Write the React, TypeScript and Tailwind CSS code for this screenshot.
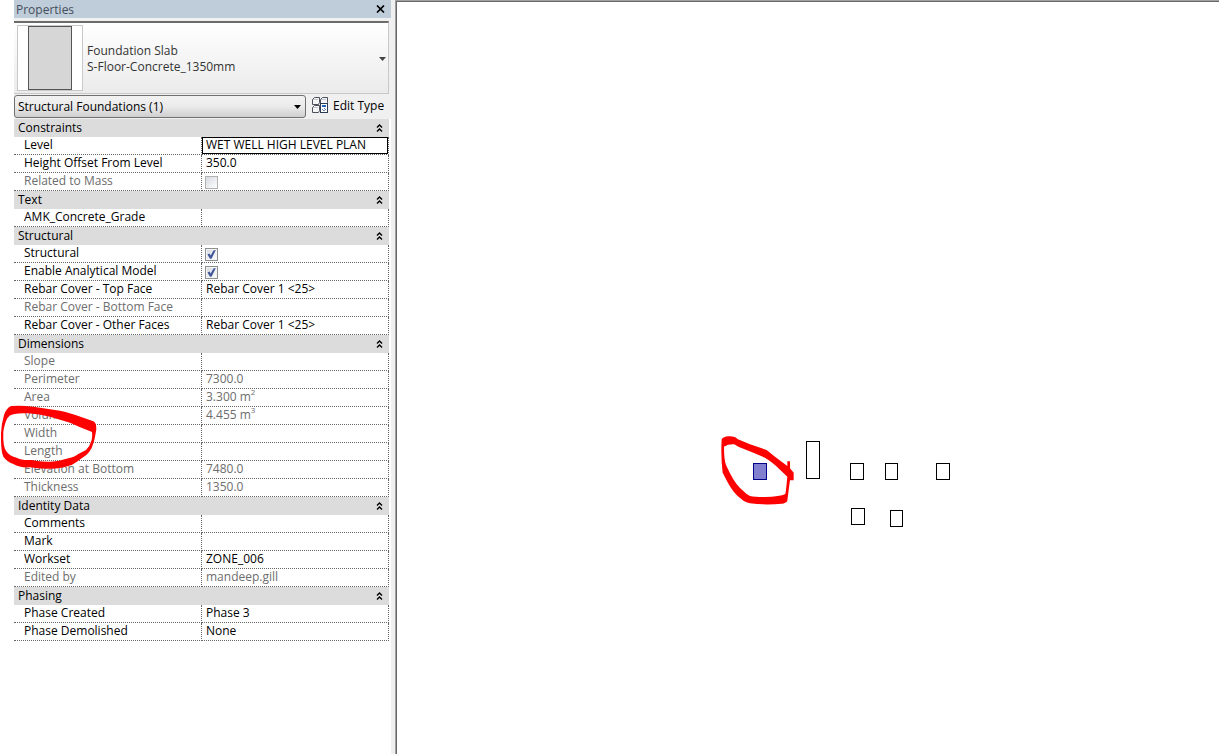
import { useState } from "react";
import clsx from "clsx";

type Row = {
  name: string;
  value?: string;
  sup?: string;
  check?: boolean;
  readOnly?: boolean;
  active?: boolean;
};

type Group = { title: string; rows: Row[] };

const groups: Group[] = [
  {
    title: "Constraints",
    rows: [
      { name: "Level", value: "WET WELL HIGH LEVEL PLAN", active: true },
      { name: "Height Offset From Level", value: "350.0" },
      { name: "Related to Mass", check: false, readOnly: true },
    ],
  },
  { title: "Text", rows: [{ name: "AMK_Concrete_Grade", value: "" }] },
  {
    title: "Structural",
    rows: [
      { name: "Structural", check: true },
      { name: "Enable Analytical Model", check: true },
      { name: "Rebar Cover - Top Face", value: "Rebar Cover 1 <25>" },
      { name: "Rebar Cover - Bottom Face", readOnly: true },
      { name: "Rebar Cover - Other Faces", value: "Rebar Cover 1 <25>" },
    ],
  },
  {
    title: "Dimensions",
    rows: [
      { name: "Slope", readOnly: true },
      { name: "Perimeter", value: "7300.0", readOnly: true },
      { name: "Area", value: "3.300 m", sup: "2", readOnly: true },
      { name: "Volume", value: "4.455 m", sup: "3", readOnly: true },
      { name: "Width", readOnly: true },
      { name: "Length", readOnly: true },
      { name: "Elevation at Bottom", value: "7480.0", readOnly: true },
      { name: "Thickness", value: "1350.0", readOnly: true },
    ],
  },
  {
    title: "Identity Data",
    rows: [
      { name: "Comments", value: "" },
      { name: "Mark", value: "" },
      { name: "Workset", value: "ZONE_006" },
      { name: "Edited by", value: "mandeep.gill", readOnly: true },
    ],
  },
  {
    title: "Phasing",
    rows: [
      { name: "Phase Created", value: "Phase 3" },
      { name: "Phase Demolished", value: "None" },
    ],
  },
];

function CollapseIcon() {
  return (
    <svg width="7" height="9" viewBox="0 0 7 9" fill="none" stroke="#000" strokeWidth="1.4">
      <path d="M1 3.500 3.500 1 6 3.500M1 7.500 3.500 5 6 7.500" />
    </svg>
  );
}

function EditTypeIcon() {
  return (
    <svg width="17" height="17" viewBox="0 0 17 17" fill="none">
      <g fill="#f4f5f7" stroke="#4b505a">
        <path d="M2.500 .5H7.500V5.500L6.500 7.500H.5V2.500z" />
        <path d="M10.500 .5H15.500V5.500L14.500 7.500H8.500V2.500z" />
        <path d="M2.500 8.500H7.500V13.500L6.500 15.500H.5V10.500z" />
      </g>
      <path d="M1 2.500H6M9 2.500H14M1 10.500H6" stroke="#c3c6cc" />
      <rect x="8.500" y="6.500" width="7" height="9" fill="#fff" stroke="#2f3b52" />
      <rect x="10" y="8" width="4" height="2" fill="#1f66b5" />
      <path d="M10 12.500h1M12 11.500h1M13 12.500h1M11 13.500h2" stroke="#5f7fae" />
    </svg>
  );
}

function Checkbox({ row, id }: { row: Row; id: string }) {
  const [checked, setChecked] = useState(!!row.check);
  return (
    <span className="relative mt-px flex size-[13px]">
      <input
        id={id}
        type="checkbox"
        checked={checked}
        disabled={row.readOnly}
        onChange={(e) => setChecked(e.target.checked)}
        className={clsx(
          "size-[13px] appearance-none border bg-linear-to-br from-[#d5d9e0] to-white",
          row.readOnly ? "border-[#b1b1b1]" : "border-[#8e8f8f] inset-ring inset-ring-[#f4f4f4]"
        )}
      />
      {checked && (
        <svg
          className="pointer-events-none absolute inset-0"
          width="13"
          height="13"
          viewBox="0 0 13 13"
        >
          <path d="M2.500 6.500 4.500 5.500 5.700 7.500 8.500 2.500 10.800 2 6.500 10.800 5 10.800z" fill="#3f5598" />
        </svg>
      )}
    </span>
  );
}

function PropertyRow({ row }: { row: Row }) {
  const id = row.name.toLowerCase().replace(/[^a-z]+/g, "-");
  const isCheck = row.check !== undefined;
  const editable = !row.readOnly && !isCheck;

  return (
    <tr className={clsx("h-[18px]", row.readOnly ? "text-[#6d6d6d]" : "text-black")}>
      <th
        scope="row"
        className="h-[18px] border-r border-b border-dotted border-[#666] p-0 pl-2.5 text-left font-normal"
      >
        <label htmlFor={editable || isCheck ? id : undefined} className="block h-[17px] leading-4">
          {row.name}
        </label>
      </th>
      <td className="h-[18px] border-r border-b border-dotted border-[#666] p-0">
        {isCheck && (
          <div className="flex h-[17px] items-center pl-[3px]">
            <Checkbox row={row} id={id} />
          </div>
        )}
        {editable && (
          <input
            id={id}
            type="text"
            defaultValue={row.value}
            className={clsx(
              "block h-[17px] w-full border px-[3px] pb-0.5 leading-4 outline-none",
              row.active ? "border-black" : "border-transparent"
            )}
          />
        )}
        {!editable && !isCheck && (
          <div className="h-[17px] pl-1 leading-4">
            {row.value}
            {row.sup && <span className="relative -top-1.5 text-[8px] leading-none">{row.sup}</span>}
          </div>
        )}
      </td>
    </tr>
  );
}

function PropertiesPalette() {
  return (
    <aside className="w-[377px] shrink-0">
      <header className="flex h-[18px] items-center justify-between bg-[#bfcddb] pr-1.5 pl-0.5 text-[#444e5a]">
        <h1 className="pt-0.5">Properties</h1>
        <button type="button" aria-label="Close">
          <svg width="9" height="8" viewBox="0 0 9 8" stroke="#000" strokeWidth="1.7">
            <path d="M1 .5 8 7.500M8 .5 1 7.500" />
          </svg>
        </button>
      </header>

      <div className="bg-[#f0f0f0] pt-[3px] pr-0.5">
        <button
          type="button"
          className="flex h-[73px] w-full items-center border-t-2 border-r border-b border-[#c8c8c8] border-t-[#6b6b6b] bg-linear-to-b from-white to-[#ebebeb] pr-0.5 pl-[3px] text-left"
        >
          <span className="flex size-[66px] justify-center border border-[#c8c8c8] bg-white">
            <span className="h-16 w-11 border border-[#555] bg-[#d6d6d6]" />
          </span>
          <span className="ml-1 flex-1 pt-0.5 leading-4 text-[#333]">
            Foundation Slab
            <br />
            S-Floor-Concrete_1350mm
          </span>
          <svg className="mt-0.5" width="7" height="4" viewBox="0 0 7 4" fill="#444">
            <path d="M0 0h7L3.500 4z" />
          </svg>
        </button>

        <div className="flex h-[25px] items-center">
          <div className="relative w-[292px]">
            <select
              aria-label="Element filter"
              className="block h-[23px] w-full appearance-none rounded-[3px] border border-[#707070] bg-linear-to-b from-[#f2f2f2] via-[#ebebeb] via-50% to-[#cfcfcf] pl-[3px] text-black"
            >
              <option>Structural Foundations (1)</option>
            </select>
            <svg
              className="pointer-events-none absolute top-2.5 right-[5px]"
              width="7"
              height="4"
              viewBox="0 0 7 4"
            >
              <path d="M0 0h7L3.500 4z" />
            </svg>
          </div>
          <button type="button" className="ml-1.5 flex items-center gap-1 pb-0.5 text-black">
            <EditTypeIcon />
            Edit Type
          </button>
        </div>
      </div>

      <div className="pr-0.5">
        <table className="w-full table-fixed border-separate border-spacing-0">
          <colgroup>
            <col className="w-[188px]" />
            <col />
          </colgroup>
          {groups.map((group) => (
            <tbody key={group.title}>
              <tr>
                <th
                  colSpan={2}
                  scope="colgroup"
                  className="h-[18px] bg-[#dcdcdc] p-0 font-normal text-black"
                >
                  <div className="flex h-[18px] items-center justify-between pr-1.5 pl-1">
                    {group.title}
                    <button type="button" aria-label={`Collapse ${group.title}`}>
                      <CollapseIcon />
                    </button>
                  </div>
                </th>
              </tr>
              {group.rows.map((row) => (
                <PropertyRow key={row.name} row={row} />
              ))}
            </tbody>
          ))}
        </table>
      </div>
    </aside>
  );
}

// slab outlines on the plan, in drawing coordinates
const slabs = [
  { x: 409, y: 441, w: 13, h: 37 },
  { x: 453, y: 463, w: 13, h: 16 },
  { x: 488, y: 463, w: 12, h: 16 },
  { x: 539, y: 463, w: 13, h: 16 },
  { x: 454, y: 508, w: 13, h: 16 },
  { x: 493, y: 510, w: 12, h: 16 },
];

function PlanView() {
  return (
    <main className="flex min-w-0 flex-1 overflow-hidden border-t border-l border-[#a0a0a0] bg-white">
      <div className="min-w-0 flex-1 border-t border-l border-[#696969]">
        <svg
          className="-mt-0.5 -ml-px"
          width="823"
          height="754"
          viewBox="0 0 823 754"
          fill="none"
          role="img"
          aria-label="Floor plan"
        >
          <g stroke="#000" shapeRendering="crispEdges">
            {slabs.map((s) => (
              <rect key={`${s.x}-${s.y}`} x={s.x + 1.5} y={s.y + 0.5} width={s.w} height={s.h} />
            ))}
          </g>
          <rect
            x="357.500"
            y="463.500"
            width="13"
            height="16"
            fill="#8080cf"
            stroke="#00008b"
            shapeRendering="crispEdges"
          />
          {/* red marker loop round the selected slab */}
          <path
            transform="translate(304 420) scale(0.33333)"
            fill="#f00"
            fillRule="evenodd"
            d="M65 58Q70 50 85 49Q106 48 112 57L150 73L200 90L225 110L262 138V124H270V145L281 158V181H270L266 210L262 242Q258 250 245 251Q200 256 150 250Q132 246 125 238Q100 220 82 185L68 158Q62 110 65 58ZM72 80Q84 72 103 73L115 80L160 98L195 113Q210 122 225 135L262 170L258 210L256 222Q240 230 195 231Q165 231 150 228Q138 222 130 213Q108 196 90 160L78 135Q72 118 72 80Z"
          />
        </svg>
      </div>
    </main>
  );
}

// red marker loop round the Width and Length rows
function RedCircle() {
  return (
    <svg
      className="pointer-events-none absolute top-[400px] left-0"
      width="100"
      height="70"
      viewBox="0 30 300 210"
      fill="#f00"
      aria-hidden="true"
    >
      <path
        fillRule="evenodd"
        d="M3 130Q4 102 12 75Q20 52 34 48Q60 45 100 50L180 62Q215 70 235 78L280 94Q289 97 289 118Q284 150 280 160Q276 176 268 185Q260 196 245 205Q230 217 215 225Q185 236 150 236Q115 237 90 232Q60 234 40 222Q20 214 10 200Q2 185 3 130ZM10 125Q14 100 22 85Q28 75 40 73Q60 68 85 70Q118 73 150 80L210 98Q240 112 276 126Q278 140 275 150Q270 168 258 180L235 192Q225 200 205 205Q180 214 150 215Q122 216 95 210Q65 212 50 203Q30 198 20 185Q8 172 10 125Z"
      />
    </svg>
  );
}

export default function App() {
  return (
    <div className="relative flex min-h-screen bg-white pl-3.5 font-['Open_Sans','Noto_Sans',sans-serif] text-[12px]">
      <PropertiesPalette />
      <div className="w-1 bg-[#f0f0f0]" />
      <PlanView />
      <RedCircle />
    </div>
  );
}
